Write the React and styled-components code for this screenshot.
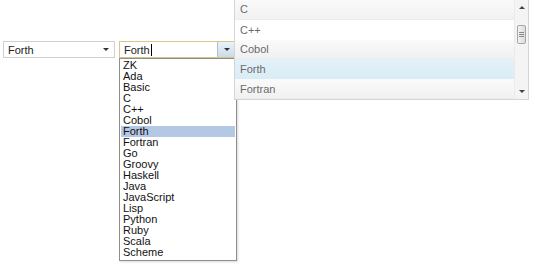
import styled, { createGlobalStyle } from 'styled-components'

const Global = createGlobalStyle`
  body {
    margin: 0;
    background: #fff;
    font-family: "Liberation Sans", Arial, sans-serif;
  }
`

const languages = ['ZK', 'Ada', 'Basic', 'C', 'C++', 'Cobol', 'Forth', 'Fortran', 'Go', 'Groovy',
  'Haskell', 'Java', 'JavaScript', 'Lisp', 'Python', 'Ruby', 'Scala', 'Scheme']

const panelItems = ['C', 'C++', 'Cobol', 'Forth', 'Fortran']

export default function App() {
  return (
    <Page>
      <Global />
      <Row>
        <Select>
          <span>Forth</span>
          <Caret />
        </Select>
        <Combo>
          <ComboInput>Forth<Cursor /></ComboInput>
          <ComboButton><Caret /></ComboButton>
          <List>
            {languages.map(l => (
              <ListItem key={l} selected={l === 'Forth'}>{l}</ListItem>
            ))}
          </List>
        </Combo>
      </Row>
      <Panel>
        <PanelRows>
          {panelItems.map((l, i) => (
            <PanelRow key={l} kind={l === 'Forth' ? 'active' : i % 2 ? 'white' : 'grey'}>{l}</PanelRow>
          ))}
        </PanelRows>
        <Scrollbar>
          <Arrow up />
          <Track><Thumb><Grip /><Grip /><Grip /></Thumb></Track>
          <Arrow />
        </Scrollbar>
      </Panel>
    </Page>
  )
}

const Page = styled.div`
  position: relative;
  width: 540px;
  height: 271px;
  padding-top: 41px;
  box-sizing: border-box;
`

const Row = styled.div`
  display: flex;
  gap: 4px;
  padding-left: 3px;
  font-size: 11px;
`

const Select = styled.div`
  width: 112px;
  height: 17px;
  box-sizing: border-box;
  border: 1px solid #cfcfcf;
  display: flex;
  align-items: center;
  justify-content: space-between;
  padding: 0 5px 0 4px;
  color: #222;
`

const Caret = styled.span`
  width: 0;
  height: 0;
  border-left: 3px solid transparent;
  border-right: 3px solid transparent;
  border-top: 3px solid #333;
`

const Combo = styled.div`
  position: relative;
  display: flex;
  width: 118px;
  height: 17px;
  box-sizing: border-box;
  border: 1px solid #d9c48a;
`

const ComboInput = styled.div`
  flex: 1;
  display: flex;
  align-items: center;
  padding-left: 4px;
  color: #222;
`

const Cursor = styled.span`
  width: 1px;
  height: 12px;
  background: #000;
  margin-left: 1px;
`

const ComboButton = styled.div`
  width: 18px;
  display: flex;
  align-items: center;
  justify-content: center;
  border-left: 1px solid #a9c0d4;
  background: linear-gradient(#e9f2f9, #c9dceb);
`

const List = styled.div`
  position: absolute;
  top: 16px;
  left: -1px;
  width: 118px;
  box-sizing: border-box;
  border: 1px solid #8e8e8e;
  background: #fff;
  padding: 1px 1px 2px;
  box-shadow: 1px 1px 2px rgba(0,0,0,0.15);
`

const ListItem = styled.div`
  height: 11px;
  line-height: 11px;
  padding-left: 2px;
  font-size: 11px;
  color: #111;
  background: ${p => (p.selected ? '#b4c8e6' : 'transparent')};
`

const Panel = styled.div`
  position: absolute;
  top: 0;
  left: 234px;
  width: 295px;
  height: 100px;
  box-sizing: border-box;
  border: 1px solid #d5d5d5;
  border-top: none;
  display: flex;
  background: #fff;
  font-size: 11px;
`

const PanelRows = styled.div`
  flex: 1;
  display: flex;
  flex-direction: column;
`

const rowBg = {
  grey: 'linear-gradient(#fafafa, #f1f1f1)',
  white: '#fff',
  active: 'linear-gradient(#e3f1f8, #d9ecf5)',
}

const PanelRow = styled.div`
  height: 20px;
  display: flex;
  align-items: center;
  padding-left: 5px;
  color: #6b6b6b;
  background: ${p => rowBg[p.kind]};
  border-bottom: ${p => (p.kind === 'grey' ? '1px solid #ececec' : 'none')};
  box-sizing: border-box;
`

const Scrollbar = styled.div`
  width: 13px;
  display: flex;
  flex-direction: column;
  align-items: center;
  background: #f4f4f4;
  border-left: 1px solid #ebebeb;
`

const Arrow = styled.span`
  margin: 6px 0;
  width: 0;
  height: 0;
  border-left: 3px solid transparent;
  border-right: 3px solid transparent;
  ${p => (p.up ? 'border-bottom: 3px solid #444;' : 'border-top: 3px solid #444;')}
`

const Track = styled.div`
  flex: 1;
  width: 100%;
  padding-top: 10px;
  display: flex;
  justify-content: center;
`

const Thumb = styled.div`
  width: 9px;
  height: 19px;
  box-sizing: border-box;
  border: 1px solid #a6a6a6;
  border-radius: 2px;
  background: linear-gradient(90deg, #f3f3f3, #dcdcdc);
  display: flex;
  flex-direction: column;
  justify-content: center;
  align-items: center;
  gap: 1px;
`

const Grip = styled.span`
  width: 5px;
  height: 1px;
  background: #8a8a8a;
`
